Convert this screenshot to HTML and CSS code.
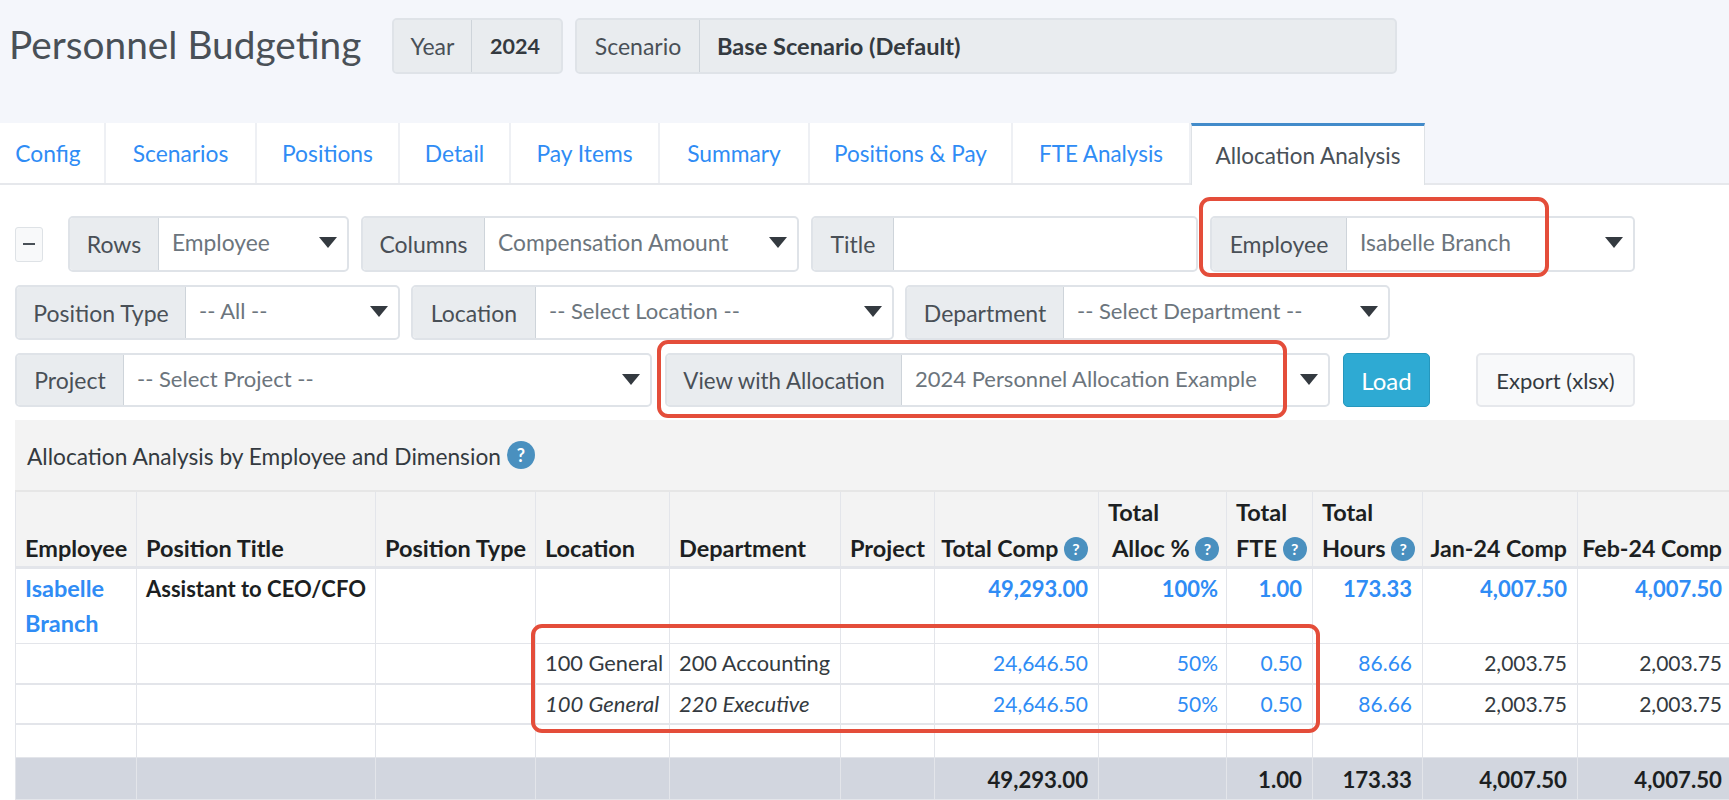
FILE: index.html
```html
<!DOCTYPE html>
<html lang="en">
<head>
<meta charset="utf-8">
<title>Personnel Budgeting</title>
<link rel="stylesheet" href="styles.css">
</head>
<body>
<div class="page">
  <header class="top">
    <h1 class="title">Personnel Budgeting</h1>
    <div class="group g-year"><span class="lbl l-year">Year</span><strong class="val v-year">2024</strong></div>
    <div class="group g-scn"><span class="lbl l-scn">Scenario</span><strong class="val v-scn">Base Scenario (Default)</strong></div>
  </header>
  <nav class="tabs">
    <a class="tab t1">Config</a><a class="tab t2">Scenarios</a><a class="tab t3">Positions</a><a class="tab t4">Detail</a><a class="tab t5">Pay Items</a><a class="tab t6">Summary</a><a class="tab t7">Positions &amp; Pay</a><a class="tab t8">FTE Analysis</a><a class="tab active t9">Allocation Analysis</a>
  </nav>
  <main class="main">
    <div class="filters">
      <div class="row row1">
        <button class="mini"><span class="dash"></span></button>
        <div class="field f-rows"><span class="lbl l-rows">Rows</span><span class="sel">Employee<i class="arrow"></i></span></div>
        <div class="field f-cols"><span class="lbl l-cols">Columns</span><span class="sel">Compensation Amount<i class="arrow"></i></span></div>
        <div class="field f-title"><span class="lbl l-title">Title</span><span class="sel"></span></div>
        <div class="field f-emp"><span class="lbl l-emp">Employee</span><span class="sel">Isabelle Branch<i class="arrow"></i></span></div>
      </div>
      <div class="row row2">
        <div class="field f-ptype"><span class="lbl l-ptype">Position Type</span><span class="sel tight">-- All --<i class="arrow"></i></span></div>
        <div class="field f-loc"><span class="lbl l-loc">Location</span><span class="sel tight">-- Select Location --<i class="arrow"></i></span></div>
        <div class="field f-dept"><span class="lbl l-dept">Department</span><span class="sel tight">-- Select Department --<i class="arrow"></i></span></div>
      </div>
      <div class="row row3">
        <div class="field f-proj"><span class="lbl l-proj">Project</span><span class="sel tight">-- Select Project --<i class="arrow"></i></span></div>
        <div class="field f-view"><span class="lbl l-view">View with Allocation</span><span class="sel tight">2024 Personnel Allocation Example<i class="arrow"></i></span></div>
        <button class="btn load">Load</button>
        <button class="btn export">Export (xlsx)</button>
      </div>
    </div>
    <section class="panel">
      <div class="panel-head">Allocation Analysis by Employee and Dimension<span class="help big">?</span></div>
      <table class="grid">
        <colgroup>
          <col class="c1"><col class="c2"><col class="c3"><col class="c4"><col class="c5"><col class="c6"><col class="c7"><col class="c8"><col class="c9"><col class="c10"><col class="c11"><col class="c12">
        </colgroup>
        <thead>
          <tr>
            <th>Employee</th><th>Position Title</th><th>Position Type</th><th>Location</th><th>Department</th><th>Project</th>
            <th class="num">Total Comp <span class="help">?</span></th>
            <th>Total<br><span class="indent">Alloc % <span class="help">?</span></span></th>
            <th>Total<br>FTE <span class="help">?</span></th>
            <th>Total<br>Hours <span class="help">?</span></th>
            <th class="num month">Jan-24 Comp</th><th class="num month">Feb-24 Comp</th>
          </tr>
        </thead>
        <tbody>
          <tr class="parent">
            <td><a class="link name">Isabelle Branch</a></td><td>Assistant to CEO/CFO</td><td></td><td></td><td></td><td></td>
            <td class="num link">49,293.00</td><td class="num link pct">100%</td><td class="num link">1.00</td><td class="num link">173.33</td><td class="num link">4,007.50</td><td class="num link">4,007.50</td>
          </tr>
          <tr class="child">
            <td></td><td></td><td></td><td>100 General</td><td>200 Accounting</td><td></td>
            <td class="num link">24,646.50</td><td class="num link pct">50%</td><td class="num link">0.50</td><td class="num link">86.66</td><td class="num">2,003.75</td><td class="num">2,003.75</td>
          </tr>
          <tr class="child alt">
            <td></td><td></td><td></td><td><em>100 General</em></td><td><em>220 Executive</em></td><td></td>
            <td class="num link">24,646.50</td><td class="num link pct">50%</td><td class="num link">0.50</td><td class="num link">86.66</td><td class="num">2,003.75</td><td class="num">2,003.75</td>
          </tr>
          <tr class="blank"><td></td><td></td><td></td><td></td><td></td><td></td><td></td><td></td><td></td><td></td><td></td><td></td></tr>
          <tr class="total">
            <td></td><td></td><td></td><td></td><td></td><td></td>
            <td class="num">49,293.00</td><td></td><td class="num">1.00</td><td class="num">173.33</td><td class="num">4,007.50</td><td class="num">4,007.50</td>
          </tr>
        </tbody>
      </table>
    </section>
  </main>
  <div class="mark m1"></div>
  <div class="mark m2"></div>
  <div class="mark m3"></div>
</div>
</body>
</html>
```
FILE: styles.css
```css
* { box-sizing: border-box; }
html, body { margin: 0; padding: 0; }
body {
  font-family: "Lato", "Noto Sans", sans-serif;
  font-size: 22.5px;
  color: #343a40;
  background: #fff;
}
.page { position: relative; width: 1729px; height: 800px; overflow: hidden; }

.top {
  display: flex;
  align-items: flex-start;
  height: 123px;
  padding-top: 18px;
  background: #f4f6fb;
}
.title {
  width: 392px;
  margin: 0;
  padding: 4px 0 0 9px;
  font-size: 38.8px;
  font-weight: 400;
  line-height: 44px;
  color: #495057;
  white-space: nowrap;
}
.group, .field {
  display: flex;
  border: 2px solid #dfe3e8;
  border-radius: 5px;
  overflow: hidden;
}
.group { height: 56px; background: #e9ecef; }
.g-year { width: 171px; margin-right: 12px; }
.g-scn { width: 822px; }
.lbl {
  display: flex;
  flex: none;
  align-items: center;
  justify-content: center;
  background: #e9ecef;
  color: #495057;
  font-size: 23px;
  border-right: 1px solid #ced4da;
  white-space: nowrap;
}
.l-view { font-size: 22.3px; }
.val { display: flex; align-items: center; color: #343a40; font-weight: 700; white-space: nowrap; }
.v-year { padding-left: 18px; font-size: 21.5px; }
.v-scn { padding-left: 17px; font-size: 23.6px; }
.l-year { width: 78px; }
.l-scn { width: 123px; }

.tabs {
  display: flex;
  height: 62px;
  background: #f4f6fb;
  border-bottom: 2px solid #e6e8ec;
}
.tab {
  display: flex;
  align-items: center;
  justify-content: center;
  height: 60px;
  background: #fff;
  border-right: 2px solid #eef0f4;
  color: #2f8cf5;
  font-size: 22.8px;
  white-space: nowrap;
}
.t1 { width: 106px; padding-right: 8px; } .t2 { width: 151px; } .t3 { width: 143px; } .t4 { width: 111px; }
.t5 { width: 149px; } .t6 { width: 150px; } .t7 { width: 203px; font-size: 22.5px; } .t8 { width: 178px; font-size: 22.4px; }
.t9 { width: 234px; }
.tab.active {
  height: 62px;
  color: #495057;
  font-size: 22.5px;
  border-top: 3px solid #428bca;
  border-left: 1px solid #dee2e6;
  border-right: 1px solid #dee2e6;
}

.main { padding: 31px 0 0 15px; }
.filters { display: flex; flex-direction: column; gap: 13px; width: 1620px; }
.row { display: flex; }
.row1 { height: 56px; gap: 12px; align-items: center; }
.row2 { height: 55px; gap: 11px; }
.row3 { height: 54px; gap: 13px; }
.mini {
  display: flex;
  align-items: center;
  justify-content: center;
  width: 28px;
  height: 35px;
  margin-right: 13px;
  padding: 0;
  background: #f8f9fa;
  border: 1px solid #dee2e6;
  border-radius: 3px;
}
.dash { display: block; width: 12px; height: 2px; background: #495057; }
.field { background: #fff; height: 100%; }
.sel {
  position: relative;
  flex: 1;
  display: flex;
  align-items: center;
  padding: 0 0 4px 13px;
  color: #6c757d;
  font-size: 22.8px;
  white-space: nowrap;
}
.sel.tight { font-size: 22px; }
.arrow {
  position: absolute;
  right: 10px;
  top: 19px;
  width: 0;
  height: 0;
  border-left: 9px solid transparent;
  border-right: 9px solid transparent;
  border-top: 11px solid #343a40;
}
.f-rows { width: 281px; } .l-rows { width: 89px; }
.f-cols { width: 438px; } .l-cols { width: 122px; }
.f-title { width: 387px; } .l-title { width: 81px; }
.f-emp { width: 425px; } .l-emp { width: 135px; }
.f-ptype { width: 385px; } .l-ptype { width: 169px; }
.f-loc { width: 483px; } .l-loc { width: 123px; }
.f-dept { width: 485px; } .l-dept { width: 157px; }
.f-proj { width: 637px; } .l-proj { width: 107px; }
.f-view { width: 665px; } .l-view { width: 235px; }

.btn {
  height: 54px;
  font-family: inherit;
  border-radius: 5px;
  white-space: nowrap;
}
.load { width: 87px; font-size: 24px; background: #2eaad3; border: 1px solid #2597bd; color: #fff; }
.export { width: 159px; margin-left: 33px; font-size: 22px; background: #f8f9fa; border: 2px solid #e6e8ec; color: #343a40; }

.panel { margin-top: 13px; background: #f3f3f3; width: 1717px; }
.panel-head {
  display: flex;
  align-items: center;
  gap: 6px;
  height: 70px;
  padding: 2px 0 0 12px;
  color: #343a40;
  font-size: 22.7px;
  white-space: nowrap;
}
.help {
  display: inline-block;
  width: 24px;
  height: 24px;
  border-radius: 50%;
  background: #4a90bf;
  color: #fff;
  font-size: 16px;
  font-weight: 700;
  line-height: 24px;
  text-align: center;
  vertical-align: 2px;
}
.help.big { width: 28px; height: 28px; line-height: 28px; font-size: 18px; margin-bottom: 3px; }

.grid { table-layout: fixed; width: 1717px; border-collapse: collapse; color: #343a40; }
.c1 { width: 121px; } .c2 { width: 239px; } .c3 { width: 160px; } .c4 { width: 134px; }
.c5 { width: 171px; } .c6 { width: 94px; } .c7 { width: 164px; } .c8 { width: 128px; }
.c9 { width: 86px; } .c10 { width: 110px; } .c11 { width: 155px; } .c12 { width: 155px; }
.grid th, .grid td {
  padding: 2px 9px 1px;
  border: 1px solid #e3e5ea;
  font-size: 21px;
  line-height: 35px;
  text-align: left;
  vertical-align: top;
  white-space: nowrap;
}
.grid td em { font-size: 22px; }
.grid .child td:nth-child(4), .grid .child td:nth-child(5) { font-size: 21.8px; }
.grid th {
  height: 76px;
  padding: 0 4px 0 9px;
  font-size: 23.5px;
  line-height: 36px;
  vertical-align: bottom;
  font-weight: 700;
  color: #1c1f22;
  border-top: 2px solid #e6e6e6;
  border-bottom: 3px solid #e3e5ea;
}
.grid th.month { font-size: 22.6px; }
.grid th.num { font-size: 23.2px; }
.grid .num { text-align: right; padding-right: 10px; padding-left: 4px; }
.grid .pct { padding-right: 8px; }
.indent { margin-left: 4px; }
.link { color: #2f8cf5; }
.parent td { height: 75px; padding: 2px 9px; font-size: 22px; font-weight: 700; white-space: normal; color: #1c1f22; }
.parent td.link { color: #2f8cf5; }
.grid .parent .name { font-size: 23.5px; font-weight: 700; }
.child td { height: 41px; padding-top: 1px; padding-bottom: 2px; border-bottom-width: 2px; }
.child.alt td { height: 40px; padding-top: 1px; padding-bottom: 2px; }
.blank td { height: 33px; padding: 0; }
.grid tbody tr:not(.total) td { background: #fff; }
.grid .total td { height: 42px; padding: 4px 9px 0; background: #d2d6df; font-size: 22.2px; font-weight: 700; color: #1c1f22; }
.grid .total td.num { padding-left: 4px; padding-right: 10px; }

.mark {
  position: absolute;
  border: 4px solid #e44d3a;
  border-radius: 11px;
}
.m1 { left: 1199px; top: 197px; width: 350px; height: 80px; }
.m2 { left: 657px; top: 340px; width: 630px; height: 78px; }
.m3 { left: 531px; top: 624px; width: 789px; height: 109px; }
```
